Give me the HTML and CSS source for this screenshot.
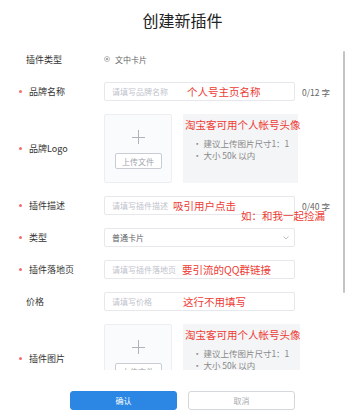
FILE: index.html
```html
<!DOCTYPE html>
<html lang="zh">
<head>
<meta charset="utf-8">
<title>创建新插件</title>
<link rel="stylesheet" href="styles.css">
</head>
<body>
<div class="dialog">
  <div class="header">创建新插件</div>
  <div class="body">
    <div class="form">
      <div class="row">
        <div class="label">插件类型</div>
        <div class="radio-group"><span class="radio"></span><span class="radio-text">文中卡片</span></div>
      </div>
      <div class="row">
        <div class="label req">品牌名称</div>
        <div class="input"><span class="ph">请填写品牌名称</span><span class="note n-name">个人号主页名称</span></div>
        <span class="count">0/12 字</span>
      </div>
      <div class="row">
        <div class="label req">品牌Logo</div>
        <div class="upload"><span class="plus"></span><span class="upbtn">上传文件</span></div>
        <div class="hint">
          <div class="note">淘宝客可用个人帐号头像</div>
          <div class="tip first">• 建议上传图片尺寸1：1</div>
          <div class="tip">• 大小 50k 以内</div>
        </div>
      </div>
      <div class="row">
        <div class="label req">插件描述</div>
        <div class="input"><span class="ph">请填写插件描述</span><span class="note n-desc">吸引用户点击</span><span class="note second">如：和我一起捡漏</span></div>
        <span class="count">0/40 字</span>
      </div>
      <div class="row">
        <div class="label req">类型</div>
        <div class="input select"><span class="val">普通卡片</span>
          <svg class="chev" width="6" height="4" viewBox="0 0 6 4"><path d="M0.5 0.5 L3 3 L5.5 0.5" fill="none" stroke="#b8b8b8" stroke-width="0.9"/></svg>
        </div>
      </div>
      <div class="row">
        <div class="label req">插件落地页</div>
        <div class="input"><span class="ph">请填写插件落地页</span><span class="note n-land">要引流的QQ群链接</span></div>
      </div>
      <div class="row">
        <div class="label">价格</div>
        <div class="input"><span class="ph">请填写价格</span><span class="note n-price">这行不用填写</span></div>
      </div>
      <div class="row">
        <div class="label req">插件图片</div>
        <div class="upload"><span class="plus"></span><span class="upbtn">上传文件</span></div>
        <div class="hint wide">
          <div class="note">淘宝客可用个人帐号头像</div>
          <div class="tip first">• 建议上传图片尺寸1：1</div>
          <div class="tip">• 大小 50k 以内</div>
        </div>
      </div>
    </div>
    <div class="thumb"></div>
  </div>
  <div class="footer">
    <div class="btn primary">确认</div>
    <div class="btn">取消</div>
  </div>
</div>
</body>
</html>
```

FILE: styles.css
```css
* { box-sizing: border-box; }
html, body { margin: 0; padding: 0; background: #fff; }
body {
  font-family: "Noto Sans CJK SC", "Noto Sans", "Liberation Sans", sans-serif;
  color: #333;
}
.dialog {
  width: 345px;
  height: 416px;
  display: flex;
  flex-direction: column;
  background: #fff;
}
.header {
  height: 40px;
  display: flex;
  align-items: center;
  justify-content: center;
  font-size: 16px;
  color: #222;
  padding-left: 20px;
  padding-bottom: 1px;
}
.body {
  height: 330px;
  overflow: hidden;
  position: relative;
}
.form {
  padding-top: 10px;
  display: flex;
  flex-direction: column;
  gap: 13px;
}
.row {
  display: flex;
  align-items: center;
  min-height: 19px;
}
.label {
  width: 104px;
  flex: none;
  padding-left: 26px;
  font-size: 9px;
  color: #333;
  display: flex;
  align-items: center;
  white-space: nowrap;
}
.label.req { padding-left: 19px; }
.label.req::before {
  content: "";
  width: 3px;
  height: 3px;
  border-radius: 50%;
  background: #f56c6c;
  margin-right: 7px;
  flex: none;
}
.radio-group { display: flex; align-items: center; }
.radio {
  width: 6px;
  height: 6px;
  border: 1px solid #bbb;
  border-radius: 50%;
  display: flex;
  align-items: center;
  justify-content: center;
  margin-right: 5px;
  margin-top: -1px;
}
.radio::after {
  content: "";
  width: 2px;
  height: 2px;
  border-radius: 50%;
  background: #888;
}
.radio-text { font-size: 8px; color: #666; }
.input {
  width: 191px;
  height: 19px;
  border: 1px solid #e6e8ec;
  border-radius: 2px;
  display: flex;
  align-items: center;
  padding-left: 7px;
  position: relative;
  flex: none;
  white-space: nowrap;
}
.ph { font-size: 8px; color: #c0c4cc; }
.val { font-size: 8px; color: #606266; }
.select { justify-content: space-between; padding-right: 5px; }
.chev { display: block; }
.note {
  font-size: 10.5px;
  line-height: 14px;
  color: #ee3a33;
  white-space: nowrap;
}
.n-name { margin-left: 19px; }
.n-desc { margin-left: 5px; }
.n-land { margin-left: 6px; }
.n-price { margin-left: 31px; }
.note.second {
  position: absolute;
  left: 136px;
  top: 12px;
}
.count {
  font-size: 8.5px;
  color: #666;
  margin-left: 7px;
  white-space: nowrap;
}
.upload {
  width: 68px;
  height: 69px;
  flex: none;
  border: 1px solid #eceef1;
  background: #fafbfc;
  border-radius: 2px;
  display: flex;
  flex-direction: column;
  align-items: center;
  padding-top: 15px;
  gap: 9px;
}
.plus {
  width: 13px;
  height: 14px;
  position: relative;
  display: block;
}
.plus::before, .plus::after {
  content: "";
  position: absolute;
  background: #b0b4ba;
}
.plus::before { left: 6px; top: 0; width: 1px; height: 14px; }
.plus::after { left: 0; top: 6.5px; width: 13px; height: 1px; }
.upbtn {
  width: 47px;
  height: 16px;
  border: 1px solid #c9ccd2;
  border-radius: 2px;
  font-size: 8px;
  color: #a0a4aa;
  display: flex;
  align-items: center;
  justify-content: center;
  background: #fff;
}
.hint {
  margin-left: 11px;
  width: 115px;
  height: 69px;
  flex: none;
  background: #f4f5f7;
  padding: 4px 0 0 2px;
  align-self: flex-start;
}
.hint.wide { width: 117px; }
.tip {
  font-size: 8.5px;
  line-height: 12px;
  color: #888;
  padding-left: 8px;
  white-space: nowrap;
}
.tip.first { margin-top: 5px; }
.thumb {
  position: absolute;
  right: 0;
  top: 11px;
  width: 2.5px;
  height: 242px;
  background: #c4c4c4;
  border-radius: 1px;
}
.footer {
  flex: 1;
  display: flex;
  padding: 21px 0 0 70px;
  gap: 11px;
}
.btn {
  width: 107px;
  height: 19px;
  border: 1px solid #d4d7dc;
  border-radius: 3px;
  font-size: 8px;
  color: #a8abb0;
  display: flex;
  align-items: center;
  justify-content: center;
  background: #fff;
}
.btn.primary {
  background: #2b87e3;
  border-color: #2b87e3;
  color: #fff;
}
```
